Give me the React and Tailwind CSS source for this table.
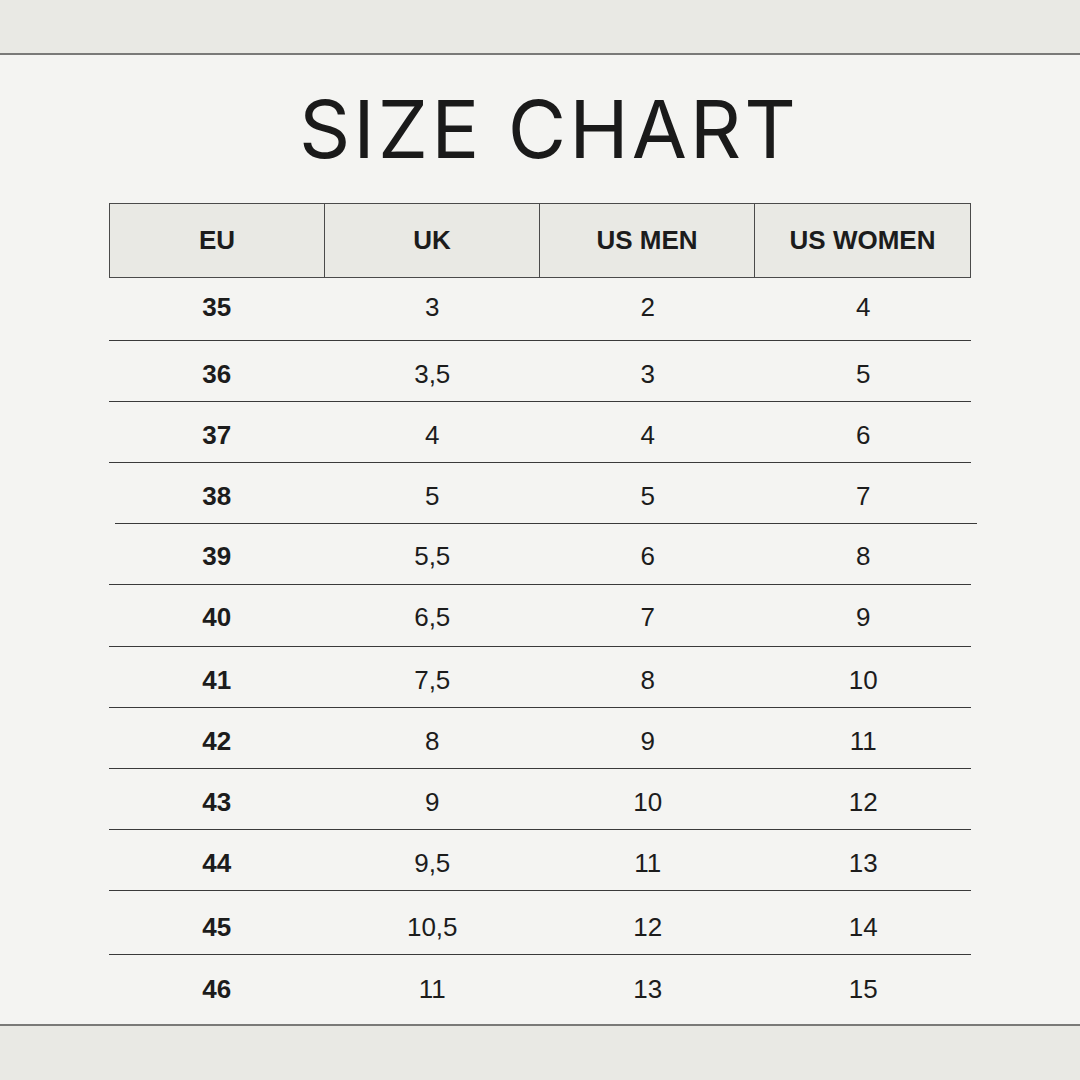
import React from "react";

const headers = ["EU", "UK", "US MEN", "US WOMEN"];

// row box classes carry the small offsets seen in the chart
const rows = [
  { eu: "35", uk: "3", men: "2", women: "4", box: "h-[62px] pb-[4px]", line: "" },
  { eu: "36", uk: "3,5", men: "3", women: "5", box: "h-[60px] pt-[6px]", line: "" },
  { eu: "37", uk: "4", men: "4", women: "6", box: "h-[60px] pt-[6px]", line: "" },
  { eu: "38", uk: "5", men: "5", women: "7", box: "h-[60px] pt-[6px]", line: "ml-[6px] -mr-[6px]" },
  { eu: "39", uk: "5,5", men: "6", women: "8", box: "h-[60px] pt-[4px]", line: "" },
  { eu: "40", uk: "6,5", men: "7", women: "9", box: "h-[61px] pt-[4px]", line: "" },
  { eu: "41", uk: "7,5", men: "8", women: "10", box: "h-[60px] pt-[6px]", line: "" },
  { eu: "42", uk: "8", men: "9", women: "11", box: "h-[60px] pt-[6px]", line: "" },
  { eu: "43", uk: "9", men: "10", women: "12", box: "h-[60px] pt-[6px]", line: "" },
  { eu: "44", uk: "9,5", men: "11", women: "13", box: "h-[60px] pt-[6px]", line: "" },
  { eu: "45", uk: "10,5", men: "12", women: "14", box: "h-[63px] pt-[9px]", line: "" },
  { eu: "46", uk: "11", men: "13", women: "15", box: "h-[69px]", line: "hidden" },
];

const SizeRow = ({ row }) => (
  <div>
    <div className={`grid grid-cols-4 items-center text-[26px] text-[#1c1c1c] ${row.box}`}>
      <div className="text-center font-bold">{row.eu}</div>
      <div className="text-center">{row.uk}</div>
      <div className="text-center">{row.men}</div>
      <div className="text-center">{row.women}</div>
    </div>
    <div className={`h-px bg-[#3a3a3a] ${row.line}`} />
  </div>
);

export default function App() {
  return (
    <div
      className="w-[1080px] h-[1080px] flex flex-col bg-[#f4f4f2] overflow-hidden"
      style={{ fontFamily: '"Liberation Sans", Arial, sans-serif' }}
    >
      <div className="h-[55px] shrink-0 bg-[#e9e9e4] border-b-2 border-[#7a7a78]" />

      <div className="flex-1 flex flex-col">
        <h1
          className="mt-[14px] mb-[14px] h-[120px] flex items-center justify-center pl-[18px] text-[80px] font-normal tracking-[3px] text-[#1a1a1a] leading-none"
          style={{ fontFamily: "Inter, sans-serif" }}
        >
          SIZE CHART
        </h1>

        <div className="w-[862px] mx-auto">
          <div className="grid grid-cols-4 h-[75px] bg-[#e9e9e4] border border-[#4a4a4a]">
            {headers.map((h, i) => (
              <div
                key={h}
                className={`flex items-center justify-center text-[26px] font-bold text-[#1c1c1c] ${
                  i < 3 ? "border-r border-[#4a4a4a]" : ""
                }`}
              >
                {h}
              </div>
            ))}
          </div>
          {rows.map((r) => (
            <SizeRow key={r.eu} row={r} />
          ))}
        </div>
      </div>

      <div className="h-[56px] shrink-0 bg-[#e9e9e4] border-t-2 border-[#7a7a78]" />
    </div>
  );
}
